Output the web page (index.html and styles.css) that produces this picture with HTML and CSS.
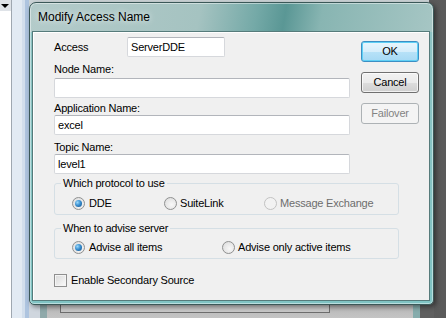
FILE: index.html
```html
<!DOCTYPE html>
<html lang="en">
<head>
    <meta charset="UTF-8">
    <title>Modify Access Name</title>
    <link rel="stylesheet" href="styles.css">
</head>
<body>
    <div class="desktop">
        <!-- pieces of the windows behind the dialog -->
        <div class="side-panel">
            <div class="combo-arrow"></div>
        </div>
        <div class="top-strip"></div>
        <div class="back-window">
            <div class="back-inner"><div class="back-box"></div></div>
        </div>

        <!-- Dialog -->
        <div class="dialog">
            <div class="titlebar">Modify Access Name</div>
            <div class="client">
                <div class="top-section">
                    <div class="fields">
                        <div class="access-row">
                            <span class="access-label">Access</span>
                            <div class="textbox short">ServerDDE</div>
                        </div>
                        <div class="field-label node-label">Node Name:</div>
                        <div class="textbox node-box"></div>
                        <div class="field-label app-label">Application Name:</div>
                        <div class="textbox">excel</div>
                        <div class="field-label topic-label">Topic Name:</div>
                        <div class="textbox">level1</div>
                    </div>
                    <div class="buttons">
                        <div class="btn default">OK</div>
                        <div class="btn">Cancel</div>
                        <div class="btn disabled">Failover</div>
                    </div>
                </div>

                <fieldset class="group protocol">
                    <legend>Which protocol to use</legend>
                    <div class="radio-row">
                        <div class="option dde"><span class="radio on"></span>DDE</div>
                        <div class="option suitelink"><span class="radio"></span>SuiteLink</div>
                        <div class="option off"><span class="radio"></span>Message Exchange</div>
                    </div>
                </fieldset>

                <fieldset class="group advise">
                    <legend>When to advise server</legend>
                    <div class="radio-row">
                        <div class="option all"><span class="radio on"></span>Advise all items</div>
                        <div class="option"><span class="radio"></span>Advise only active items</div>
                    </div>
                </fieldset>

                <div class="check-row"><span class="checkbox"></span>Enable Secondary Source</div>
            </div>
        </div>
    </div>
</body>
</html>
```

FILE: styles.css
```css
body {
    margin: 0;
    font-family: 'Liberation Sans', Arial, sans-serif;
    font-size: 11px;
    color: #000;
}
.desktop {
    position: relative;
    width: 446px;
    height: 318px;
    overflow: hidden;
    background: linear-gradient(to right, #6a6a6a, #5a5a5a);
}

/* background windows */
.side-panel {
    position: absolute;
    left: 0;
    top: 0;
    width: 29px;
    height: 318px;
    background: linear-gradient(to right, #fff 0 11px, #9fa7b0 11px 12px, #e2eaf3 12px 22px, #d2deec 22px 25px, #aec4df 25px 29px);
}
.combo-arrow {
    position: absolute;
    left: 0;
    top: 0;
    width: 11px;
    height: 11px;
    background: #dfe3e8;
}
.combo-arrow::after {
    content: "";
    position: absolute;
    left: 1px;
    top: 4px;
    border-left: 4px solid transparent;
    border-right: 4px solid transparent;
    border-top: 4px solid #000;
}
.top-strip {
    position: absolute;
    left: 29px;
    top: 0;
    width: 400px;
    height: 10px;
    background: #cdd5d8;
}
.back-window {
    position: absolute;
    left: 29px;
    top: 290px;
    width: 405px;
    height: 28px;
    background: linear-gradient(to right, #cfd6de 0 11px, #8fa9aa 11px 18px, transparent 18px 384px, #86acac 384px 391px, #5f5f5f 391px);
}
.back-inner {
    margin: 0 21px 0 18px;
    height: 28px;
    background: linear-gradient(to bottom, #a9a9a9, #c4c4c4);
}
.back-box {
    margin-left: 13px;
    width: 270px;
    height: 23px;
    box-sizing: border-box;
    border: 1px solid #6e6e6e;
    border-top: none;
    background: #c9c9c9;
}

/* dialog frame */
.dialog {
    position: absolute;
    left: 29px;
    top: 2px;
    width: 405px;
    height: 303px;
    box-sizing: border-box;
    border: 1px solid #3b5858;
    border-radius: 7px 7px 5px 5px;
    padding: 0 3px 3px 2px;
    display: flex;
    flex-direction: column;
    background:
        linear-gradient(100deg, #b4cbca 0%, #a5c3c1 42%, #74a9a7 56%, #5a9795 63%, #88b5b2 72%, #a6c6c4 100%) top / 100% 29px no-repeat,
        linear-gradient(to bottom, #8ec2c2, #7fc3c3);
    box-shadow: inset 0 0 0 1px rgba(255, 255, 255, 0.45), 2px 2px 5px rgba(0, 0, 0, 0.45);
}
.titlebar {
    height: 28px;
    line-height: 28px;
    padding-left: 6px;
    font-size: 12px;
    color: #000;
    text-shadow: 0 0 6px rgba(255, 255, 255, 0.9);
}
.client {
    flex: 1;
    border: 1px solid #567b7b;
    background: #f0f0f0;
    box-shadow: inset 1px 1px 0 #fff;
    padding: 5px 0 0 21px;
    letter-spacing: -0.2px;
}

/* fields and buttons */
.top-section {
    display: flex;
}
.fields {
    width: 296px;
    display: flex;
    flex-direction: column;
}
.access-row {
    display: flex;
    align-items: center;
    height: 20px;
}
.access-label {
    width: 73px;
}
.field-label {
    height: 13px;
    line-height: 13px;
}
.node-label {
    margin-top: 6px;
}
.node-box {
    margin-top: 2px;
}
.app-label {
    margin-top: 4px;
}
.topic-label {
    margin-top: 6px;
}
.textbox {
    height: 20px;
    line-height: 18px;
    box-sizing: border-box;
    border: 1px solid #d6d8dc;
    border-top-color: #b2b5bb;
    border-radius: 2px;
    background: #fff;
    padding-left: 3px;
}
.textbox.short {
    width: 98px;
}
.buttons {
    margin: 4px 0 0 11px;
    width: 58px;
    display: flex;
    flex-direction: column;
    gap: 10px;
}
.btn {
    height: 21px;
    line-height: 19px;
    box-sizing: border-box;
    text-align: center;
    border: 1px solid #707070;
    border-radius: 3px;
    background: linear-gradient(to bottom, #f2f2f2 0%, #ebebeb 50%, #dddddd 51%, #cfcfcf 100%);
    box-shadow: inset 0 0 0 1px rgba(255, 255, 255, 0.7);
}
.btn.default {
    border-color: #3c8fc4;
    background: linear-gradient(to bottom, #e9f6fd 0%, #d6eefb 50%, #b8e2f8 51%, #a6d9f4 100%);
    box-shadow: inset 0 0 0 1px #5fd0f5;
}
.btn.disabled {
    color: #838383;
    border-color: #adb2b5;
    background: #f4f4f4;
    box-shadow: none;
}

/* group boxes */
.group {
    width: 345px;
    box-sizing: border-box;
    margin: 3px 0 0;
    padding: 7px 0 4px 6px;
    border: 1px solid #d5dfe5;
    border-radius: 3px;
    min-inline-size: 0;
}
.group legend {
    padding: 0 2px;
    line-height: 13px;
}
.group.advise {
    margin-top: 7px;
    padding-top: 6px;
}
.radio-row {
    display: flex;
    margin-left: 11px;
    height: 13px;
    line-height: 13px;
}
.option {
    display: flex;
    align-items: center;
    gap: 3px;
}
.option.dde {
    width: 92px;
    gap: 4px;
}
.option.suitelink {
    width: 100px;
}
.option.all {
    width: 150px;
    gap: 4px;
}
.option.off {
    color: #6d6d6d;
}
.radio {
    position: relative;
    width: 13px;
    height: 13px;
    box-sizing: border-box;
    border-radius: 50%;
    border: 1px solid #8f9090;
    background: radial-gradient(circle at 60% 60%, #f8f8f8, #d9d9d9);
    flex-shrink: 0;
}
.option.off .radio {
    border-color: #c2c2c2;
    background: #f2f2f2;
}
.radio.on::after {
    content: "";
    position: absolute;
    left: 2px;
    top: 2px;
    width: 7px;
    height: 7px;
    border-radius: 50%;
    background: radial-gradient(circle at 35% 35%, #9ad9fb 0%, #3a8fd0 45%, #0c4b86 100%);
}
.check-row {
    margin-top: 15px;
    display: flex;
    align-items: center;
    gap: 4px;
    height: 13px;
    line-height: 13px;
}
.checkbox {
    width: 13px;
    height: 13px;
    box-sizing: border-box;
    border: 1px solid #8f8f8f;
    background: linear-gradient(135deg, #d8d8d8, #fbfbfb);
    box-shadow: inset 0 0 0 1px #f4f4f4;
}
```
